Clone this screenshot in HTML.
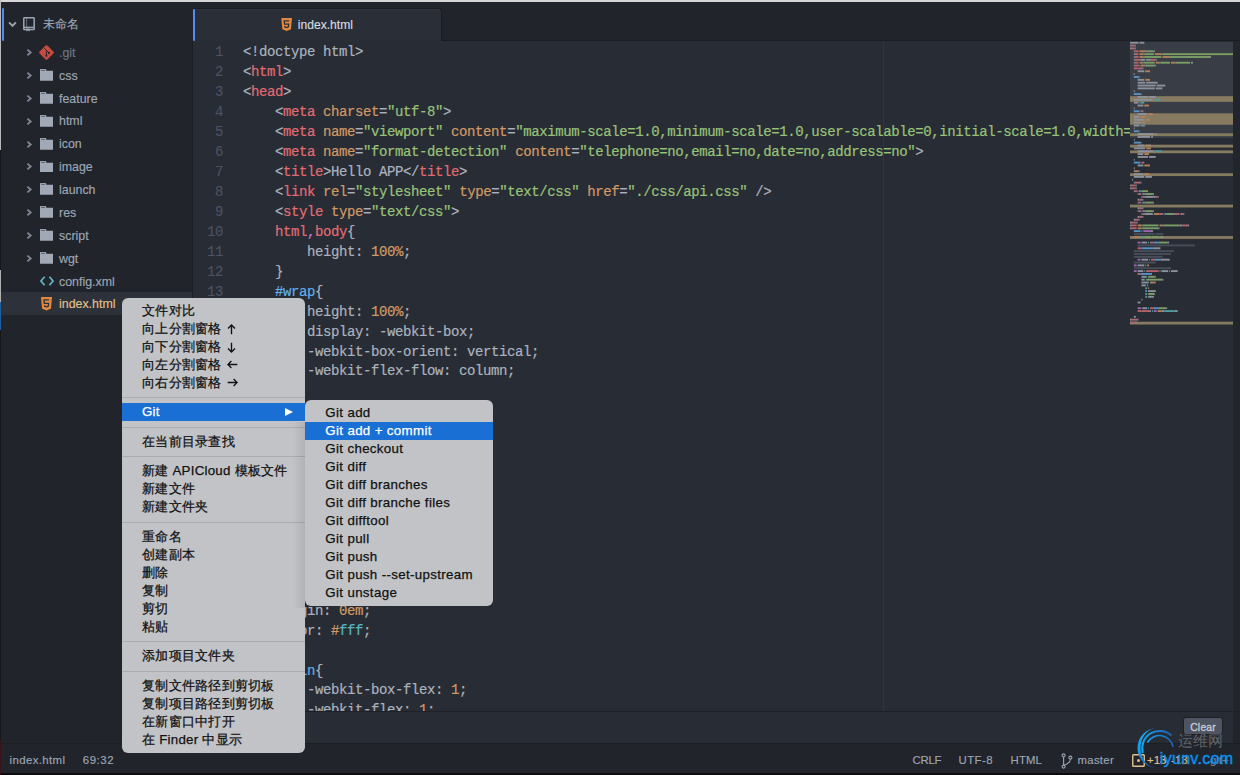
<!DOCTYPE html>
<html><head><meta charset="utf-8"><style>
*{box-sizing:border-box}
html,body{margin:0;padding:0}
body{width:1240px;height:775px;overflow:hidden;position:relative;background:#21252b;font-family:"Liberation Sans",sans-serif}
#top{position:absolute;left:0;top:0;width:1240px;height:2px;background:#d6d6d6}
#side{position:absolute;left:0;top:2px;width:192px;height:743px;background:#21252b;overflow:hidden}
#rootbar{position:absolute;left:2px;top:5.7px;width:2px;height:33.6px;background:#568af2;border-radius:1px}
#sel{position:absolute;left:0;top:290px;width:192px;height:23px;background:#2c313a}
.tr{position:absolute;left:0;height:22.88px;width:192px;line-height:22.88px;font-size:12.4px;color:#9da5b4;white-space:nowrap}
.tr .chev{position:absolute;left:26px;top:6.8px}
.tr .icw{position:absolute;left:39.5px;top:0;height:22.88px}
.tr .icw svg{position:absolute;left:0;display:block}
.ic-folder svg{top:4.9px;width:13.6px;height:11.9px;left:0.1px !important}
.ic-git svg{top:4.0px;left:-0.6px !important}
.ic-xml svg{top:6.3px}
.ic-html5 svg{top:4.3px;left:1.4px !important}
.tr .nm{position:absolute;left:59px;top:0.5px}
.tr.ign .nm{color:#6f7683}
.tr.mod .nm{color:#e2c08d}
.root{top:10.5px}
.root .chev{left:8px;top:8.5px}
.root .icw{left:23px}
.root .icw svg{top:4px}
.root .nm{left:42.6px;font-size:12px;top:0.3px}
#tabbar{position:absolute;left:192px;top:2px;width:1048px;height:39px;background:#21252b;border-bottom:1px solid #1b1d22}
#tab{position:absolute;left:1px;top:6.3px;width:249.3px;height:32.7px;background:#2a2e36;border-top-right-radius:3px;border-top:1px solid #1b1d22;border-right:1px solid #1b1d22;box-shadow:inset 0 1px 0 #30343c}
#tabbl{position:absolute;left:0;top:-0.7px;width:2px;height:32px;background:#568af2;border-radius:1px}
.ticon{position:absolute;left:88.3px;top:8.7px}
.ticon svg{display:block;width:11.3px;height:13px}
.tname{position:absolute;left:104.8px;top:0.3px;line-height:31px;font-size:12.1px;color:#d7dae0}
#editor{position:absolute;left:193px;top:41px;width:1047px;height:671px;background:#282c34;overflow:hidden}
#wrapguide{position:absolute;left:690px;top:0;width:1px;height:671px;background:#30343c}
#code{position:absolute;left:0;top:0;width:937px;height:670px;overflow:hidden}
.ln{position:absolute;left:50px;height:19.94px;line-height:19.94px;font-family:"Liberation Mono",monospace;font-size:14px;letter-spacing:-0.4px;color:#abb2bf;white-space:pre;-webkit-text-stroke:0.2px currentColor}
.num{position:absolute;left:0;width:30px;text-align:right;height:19.94px;line-height:19.94px;font-family:"Liberation Mono",monospace;font-size:14px;letter-spacing:-0.4px;color:#4b5263;margin-top:-0.1px;-webkit-text-stroke:0.15px currentColor}
.t{color:#e06c75}.a{color:#d19a66}.s{color:#98c379}.n{color:#d19a66}.i{color:#61afef}.c{color:#56b6c2}.u{color:#c678dd}
#mm{position:absolute;left:937px;top:0;width:103px;height:671px}
#mmstrip{position:absolute;left:1040px;top:0;width:7px;height:671px;background:#22262c}
#panel{position:absolute;left:193px;top:711px;width:1047px;height:32px;background:#282c34;border-top:1px solid #1e2127}
#clear{position:absolute;left:990.3px;top:5.3px;width:39.6px;height:18px;background:#4f5462;border:1px solid #1d1f24;border-radius:3px;color:#c9ccd2;font-size:10.3px;letter-spacing:.25px;line-height:20.5px;text-align:center;-webkit-text-stroke:0.3px #c9ccd2}
#pstrip{position:absolute;left:1040px;top:0;width:7px;height:32px;background:#21252b}
#status{position:absolute;left:0;top:743px;width:1240px;height:30px;background:#21252b;border-top:1px solid #1b1e23}
.sb{position:absolute;top:8.6px;font-size:11.4px;line-height:14px;color:#9da5b4;white-space:nowrap}
#bottom{position:absolute;left:0;top:773px;width:1240px;height:2px;background:#0c0c0c}
#wm{position:absolute;left:1130px;top:718px;width:110px;height:57px;overflow:hidden}
.wmcn{position:absolute;left:47.5px;top:14px;font-size:15px;line-height:18px;color:rgba(120,122,126,.75);letter-spacing:0px;font-weight:300}
.wmen{position:absolute;left:29.8px;top:31.5px;font-size:16px;line-height:18px;color:#0b8ee8;letter-spacing:.3px;-webkit-text-stroke:0.45px #0b8ee8}
#menu{position:absolute;left:122px;top:298.2px;width:183px;height:454.4px;background:#c1c3c6;border-radius:6px;padding-top:3.8px}
.mi{position:relative;height:18px;line-height:17px;font-size:13.3px;letter-spacing:.25px;color:#111;padding-left:20px;white-space:nowrap}
.mi.hl{background:#1a6fd5;color:#fff}
.msep{height:11.47px;position:relative}
.msep:after{content:"";position:absolute;left:0;right:0;top:5.2px;height:1px;background:#abacaf}
.tri{position:absolute;left:163px;top:4.3px;width:0;height:0;border-left:8.6px solid #fff;border-top:4.9px solid transparent;border-bottom:4.9px solid transparent}
#sub{position:absolute;left:305.3px;top:400px;width:187.8px;height:205.8px;background:#c1c3c6;border-radius:6px;padding-top:3.8px}
.arr{position:absolute;left:105.4px;top:3.6px}
.mi{-webkit-text-stroke:0.25px currentColor}
.tr .nm,.tname,.sb{-webkit-text-stroke:0.15px currentColor}

#ledge1{position:absolute;left:0;top:0;width:1px;height:160px;background:#b9b9b9;z-index:5}#ledge4{position:absolute;left:0;top:270px;width:1px;height:60px;background:#b0b0b0;z-index:6}#ledge5{position:absolute;left:0;top:302px;width:1px;height:28px;background:#1e5f9e;z-index:7}
#ledge2{position:absolute;left:0;top:150px;width:1px;height:590px;background:#15171b;z-index:5}
#ledge3{position:absolute;left:0;top:740px;width:1px;height:35px;background:#3a1416;z-index:5}
#sideborder{position:absolute;left:192px;top:41px;width:1px;height:702px;background:#1c1f24;z-index:3}
#sub .mi{letter-spacing:.35px}
#menu,#sub{z-index:20}
#wm{z-index:15}
#subshadow{position:absolute;left:293px;top:421.7px;width:12px;height:186px;background:linear-gradient(to right,rgba(0,0,0,0),rgba(0,0,0,.09));z-index:21}

</style></head><body>
<div id="top"></div>
<div id="ledge1"></div><div id="ledge2"></div><div id="ledge3"></div><div id="ledge4"></div><div id="ledge5"></div>
<div id="sideborder"></div>
<div id="side">
 <div id="rootbar"></div>
 <div class="tr root"><svg class="chev" width="9" height="7" viewBox="0 0 9 7"><path d="M1.1 1.3 L4.5 4.8 L7.9 1.3" stroke="#9da5b4" stroke-width="1.9" fill="none"/></svg><span class="icw"><svg width="12" height="15" viewBox="0 0 12 15"><path d="M0.8 1.4 Q0.8 0.75 1.45 0.75 H10.55 Q11.2 0.75 11.2 1.4 V11.9 Q11.2 12.55 10.55 12.55 H1.45 Q0.8 12.55 0.8 11.9 Z" stroke="#9da5b4" stroke-width="1.5" fill="none"/><path d="M3.6 1.2 V10.5" stroke="#9da5b4" stroke-width="1.1" stroke-dasharray="1.1 1" fill="none"/><path d="M0.8 10.3 H11.2" stroke="#9da5b4" stroke-width="1.3" fill="none"/><path d="M3.4 11.5 H6.6 V14.6 L5 13.5 L3.4 14.6 Z" fill="#9da5b4"/></svg></span><span class="nm">未命名</span></div>
 <div id="sel"></div>
 <div class="tr ign" style="top:39.30px"><svg class="chev" width="7" height="9" viewBox="0 0 7 9"><path d="M1.4 1.6 L4.7 4.5 L1.4 7.4" stroke="#7f8693" stroke-width="1.9" fill="none"/></svg><span class="icw ic-git"><svg width="15" height="15" viewBox="0 0 15 15"><path d="M6.6 0.6 Q7.5 -0.2 8.4 0.6 L14.4 6.6 Q15.2 7.5 14.4 8.4 L8.4 14.4 Q7.5 15.2 6.6 14.4 L0.6 8.4 Q-0.2 7.5 0.6 6.6 Z" fill="#c8493f"/><path d="M5.3 3.3 L7.4 5.4 V10.8 M7.4 5.4 L9.8 7.8" stroke="#21252b" stroke-width="0.9" fill="none"/><circle cx="7.4" cy="10.8" r="1.05" fill="#21252b"/><circle cx="9.9" cy="7.9" r="1.05" fill="#21252b"/></svg></span><span class="nm">.git</span></div>
<div class="tr" style="top:62.18px"><svg class="chev" width="7" height="9" viewBox="0 0 7 9"><path d="M1.4 1.6 L4.7 4.5 L1.4 7.4" stroke="#7f8693" stroke-width="1.9" fill="none"/></svg><span class="icw ic-folder"><svg width="14" height="12" viewBox="0 0 14 12"><path d="M0 0.6 Q0 0 0.6 0 H5.6 Q6.2 0 6.4 0.6 L6.6 1.6 H13.4 Q14 1.6 14 2.2 V11.4 Q14 12 13.4 12 H0.6 Q0 12 0 11.4 Z" fill="#a2a9b6"/><path d="M1.2 1.3 H5.2" stroke="#4e535c" stroke-width="0.9"/></svg></span><span class="nm">css</span></div>
<div class="tr" style="top:85.06px"><svg class="chev" width="7" height="9" viewBox="0 0 7 9"><path d="M1.4 1.6 L4.7 4.5 L1.4 7.4" stroke="#7f8693" stroke-width="1.9" fill="none"/></svg><span class="icw ic-folder"><svg width="14" height="12" viewBox="0 0 14 12"><path d="M0 0.6 Q0 0 0.6 0 H5.6 Q6.2 0 6.4 0.6 L6.6 1.6 H13.4 Q14 1.6 14 2.2 V11.4 Q14 12 13.4 12 H0.6 Q0 12 0 11.4 Z" fill="#a2a9b6"/><path d="M1.2 1.3 H5.2" stroke="#4e535c" stroke-width="0.9"/></svg></span><span class="nm">feature</span></div>
<div class="tr" style="top:107.94px"><svg class="chev" width="7" height="9" viewBox="0 0 7 9"><path d="M1.4 1.6 L4.7 4.5 L1.4 7.4" stroke="#7f8693" stroke-width="1.9" fill="none"/></svg><span class="icw ic-folder"><svg width="14" height="12" viewBox="0 0 14 12"><path d="M0 0.6 Q0 0 0.6 0 H5.6 Q6.2 0 6.4 0.6 L6.6 1.6 H13.4 Q14 1.6 14 2.2 V11.4 Q14 12 13.4 12 H0.6 Q0 12 0 11.4 Z" fill="#a2a9b6"/><path d="M1.2 1.3 H5.2" stroke="#4e535c" stroke-width="0.9"/></svg></span><span class="nm">html</span></div>
<div class="tr" style="top:130.82px"><svg class="chev" width="7" height="9" viewBox="0 0 7 9"><path d="M1.4 1.6 L4.7 4.5 L1.4 7.4" stroke="#7f8693" stroke-width="1.9" fill="none"/></svg><span class="icw ic-folder"><svg width="14" height="12" viewBox="0 0 14 12"><path d="M0 0.6 Q0 0 0.6 0 H5.6 Q6.2 0 6.4 0.6 L6.6 1.6 H13.4 Q14 1.6 14 2.2 V11.4 Q14 12 13.4 12 H0.6 Q0 12 0 11.4 Z" fill="#a2a9b6"/><path d="M1.2 1.3 H5.2" stroke="#4e535c" stroke-width="0.9"/></svg></span><span class="nm">icon</span></div>
<div class="tr" style="top:153.70px"><svg class="chev" width="7" height="9" viewBox="0 0 7 9"><path d="M1.4 1.6 L4.7 4.5 L1.4 7.4" stroke="#7f8693" stroke-width="1.9" fill="none"/></svg><span class="icw ic-folder"><svg width="14" height="12" viewBox="0 0 14 12"><path d="M0 0.6 Q0 0 0.6 0 H5.6 Q6.2 0 6.4 0.6 L6.6 1.6 H13.4 Q14 1.6 14 2.2 V11.4 Q14 12 13.4 12 H0.6 Q0 12 0 11.4 Z" fill="#a2a9b6"/><path d="M1.2 1.3 H5.2" stroke="#4e535c" stroke-width="0.9"/></svg></span><span class="nm">image</span></div>
<div class="tr" style="top:176.58px"><svg class="chev" width="7" height="9" viewBox="0 0 7 9"><path d="M1.4 1.6 L4.7 4.5 L1.4 7.4" stroke="#7f8693" stroke-width="1.9" fill="none"/></svg><span class="icw ic-folder"><svg width="14" height="12" viewBox="0 0 14 12"><path d="M0 0.6 Q0 0 0.6 0 H5.6 Q6.2 0 6.4 0.6 L6.6 1.6 H13.4 Q14 1.6 14 2.2 V11.4 Q14 12 13.4 12 H0.6 Q0 12 0 11.4 Z" fill="#a2a9b6"/><path d="M1.2 1.3 H5.2" stroke="#4e535c" stroke-width="0.9"/></svg></span><span class="nm">launch</span></div>
<div class="tr" style="top:199.46px"><svg class="chev" width="7" height="9" viewBox="0 0 7 9"><path d="M1.4 1.6 L4.7 4.5 L1.4 7.4" stroke="#7f8693" stroke-width="1.9" fill="none"/></svg><span class="icw ic-folder"><svg width="14" height="12" viewBox="0 0 14 12"><path d="M0 0.6 Q0 0 0.6 0 H5.6 Q6.2 0 6.4 0.6 L6.6 1.6 H13.4 Q14 1.6 14 2.2 V11.4 Q14 12 13.4 12 H0.6 Q0 12 0 11.4 Z" fill="#a2a9b6"/><path d="M1.2 1.3 H5.2" stroke="#4e535c" stroke-width="0.9"/></svg></span><span class="nm">res</span></div>
<div class="tr" style="top:222.34px"><svg class="chev" width="7" height="9" viewBox="0 0 7 9"><path d="M1.4 1.6 L4.7 4.5 L1.4 7.4" stroke="#7f8693" stroke-width="1.9" fill="none"/></svg><span class="icw ic-folder"><svg width="14" height="12" viewBox="0 0 14 12"><path d="M0 0.6 Q0 0 0.6 0 H5.6 Q6.2 0 6.4 0.6 L6.6 1.6 H13.4 Q14 1.6 14 2.2 V11.4 Q14 12 13.4 12 H0.6 Q0 12 0 11.4 Z" fill="#a2a9b6"/><path d="M1.2 1.3 H5.2" stroke="#4e535c" stroke-width="0.9"/></svg></span><span class="nm">script</span></div>
<div class="tr" style="top:245.22px"><svg class="chev" width="7" height="9" viewBox="0 0 7 9"><path d="M1.4 1.6 L4.7 4.5 L1.4 7.4" stroke="#7f8693" stroke-width="1.9" fill="none"/></svg><span class="icw ic-folder"><svg width="14" height="12" viewBox="0 0 14 12"><path d="M0 0.6 Q0 0 0.6 0 H5.6 Q6.2 0 6.4 0.6 L6.6 1.6 H13.4 Q14 1.6 14 2.2 V11.4 Q14 12 13.4 12 H0.6 Q0 12 0 11.4 Z" fill="#a2a9b6"/><path d="M1.2 1.3 H5.2" stroke="#4e535c" stroke-width="0.9"/></svg></span><span class="nm">wgt</span></div>
<div class="tr" style="top:268.10px"><span class="icw ic-xml"><svg width="14" height="10" viewBox="0 0 14 10"><path d="M4.6 0.8 L1 5 L4.6 9.2 M9.4 0.8 L13 5 L9.4 9.2" stroke="#62b3c6" stroke-width="1.7" fill="none"/></svg></span><span class="nm">config.xml</span></div>
<div class="tr mod" style="top:290.98px"><span class="icw ic-html5"><svg width="11" height="13.5" viewBox="0 0 11 13.5"><path d="M0 0 H11 L10 11.6 L5.5 13.5 L1 11.6 Z" fill="#e2893f"/><path d="M8.1 2.9 H3 L3.3 6.4 H7.6 L7.35 9.2 L5.5 9.9 L3.65 9.3 L3.55 8.3" stroke="#2c313a" stroke-width="1.35" fill="none"/></svg></span><span class="nm">index.html</span></div>
</div>
<div id="tabbar">
 <div id="tab"><div id="tabbl"></div><span class="ticon"><svg width="11.3" height="13" viewBox="0 0 11 13.5"><path d="M0 0 H11 L10 11.6 L5.5 13.5 L1 11.6 Z" fill="#e2893f"/><path d="M8.1 2.9 H3 L3.3 6.4 H7.6 L7.35 9.2 L5.5 9.9 L3.65 9.3 L3.55 8.3" stroke="#2b2f37" stroke-width="1.35" fill="none"/></svg></span><span class="tname">index.html</span></div>
</div>
<div id="editor">
 <div id="wrapguide"></div>
 <div id="code">
<div class="ln" style="top:2.40px">&lt;!doctype html&gt;</div>
<div class="num" style="top:2.40px">1</div>
<div class="ln" style="top:22.34px">&lt;<span class="t">html</span>&gt;</div>
<div class="num" style="top:22.34px">2</div>
<div class="ln" style="top:42.28px">&lt;<span class="t">head</span>&gt;</div>
<div class="num" style="top:42.28px">3</div>
<div class="ln" style="top:62.22px">    &lt;<span class="t">meta</span> <span class="a">charset</span>=<span class="s">"utf-8"</span>&gt;</div>
<div class="num" style="top:62.22px">4</div>
<div class="ln" style="top:82.16px">    &lt;<span class="t">meta</span> <span class="a">name</span>=<span class="s">"viewport"</span> <span class="a">content</span>=<span class="s">"maximum-scale=1.0,minimum-scale=1.0,user-scalable=0,initial-scale=1.0,width=device-width"</span>/&gt;</div>
<div class="num" style="top:82.16px">5</div>
<div class="ln" style="top:102.10px">    &lt;<span class="t">meta</span> <span class="a">name</span>=<span class="s">"format-detection"</span> <span class="a">content</span>=<span class="s">"telephone=no,email=no,date=no,address=no"</span>&gt;</div>
<div class="num" style="top:102.10px">6</div>
<div class="ln" style="top:122.04px">    &lt;<span class="t">title</span>&gt;Hello APP&lt;/<span class="t">title</span>&gt;</div>
<div class="num" style="top:122.04px">7</div>
<div class="ln" style="top:141.98px">    &lt;<span class="t">link</span> <span class="a">rel</span>=<span class="s">"stylesheet"</span> <span class="a">type</span>=<span class="s">"text/css"</span> <span class="a">href</span>=<span class="s">"./css/api.css"</span> /&gt;</div>
<div class="num" style="top:141.98px">8</div>
<div class="ln" style="top:161.92px">    &lt;<span class="t">style</span> <span class="a">type</span>=<span class="s">"text/css"</span>&gt;</div>
<div class="num" style="top:161.92px">9</div>
<div class="ln" style="top:181.86px">    <span class="t">html</span><span class="u">,</span><span class="t">body</span>{</div>
<div class="num" style="top:181.86px">10</div>
<div class="ln" style="top:201.80px">        height: <span class="n">100%</span>;</div>
<div class="num" style="top:201.80px">11</div>
<div class="ln" style="top:221.74px">    }</div>
<div class="num" style="top:221.74px">12</div>
<div class="ln" style="top:241.68px">    <span class="i">#wrap</span>{</div>
<div class="num" style="top:241.68px">13</div>
<div class="ln" style="top:261.62px">        height: <span class="n">100%</span>;</div>
<div class="ln" style="top:281.56px">        display: -webkit-box;</div>
<div class="ln" style="top:301.50px">        -webkit-box-orient: vertical;</div>
<div class="ln" style="top:321.44px">        -webkit-flex-flow: column;</div>
<div class="ln" style="top:341.38px">    }</div>
<div class="ln" style="top:361.32px"></div>
<div class="ln" style="top:381.26px"></div>
<div class="ln" style="top:401.20px"></div>
<div class="ln" style="top:421.14px"></div>
<div class="ln" style="top:441.08px"></div>
<div class="ln" style="top:461.02px"></div>
<div class="ln" style="top:480.96px"></div>
<div class="ln" style="top:500.90px"></div>
<div class="ln" style="top:520.84px"></div>
<div class="ln" style="top:540.78px"></div>
<div class="ln" style="top:560.72px">    margin: <span class="n">0em</span>;</div>
<div class="ln" style="top:580.66px">    color: <span class="n">#</span><span class="c">fff</span>;</div>
<div class="ln" style="top:600.60px">    }</div>
<div class="ln" style="top:620.54px">    <span class="i">#main</span>{</div>
<div class="ln" style="top:640.48px">        -webkit-box-flex: <span class="n">1</span>;</div>
<div class="ln" style="top:660.42px">        -webkit-flex: <span class="n">1</span>;</div>
 </div>
 <div id="mm"><svg width="103.1" height="671" viewBox="0 0 103.1 671" style="position:absolute;left:0;top:0"><rect x="0" y="0.90" width="103.1" height="96.2" fill="#393d45"/><rect x="0" y="55.14" width="103.1" height="5.71" fill="#867a60"/><rect x="0" y="72.28" width="103.1" height="11.42" fill="#867a60"/><rect x="0" y="92.26" width="103.1" height="2.85" fill="#867a60"/><rect x="0" y="103.68" width="103.1" height="2.85" fill="#867a60"/><rect x="0" y="109.39" width="103.1" height="2.85" fill="#867a60"/><rect x="0" y="132.23" width="103.1" height="2.85" fill="#867a60"/><rect x="0" y="163.63" width="103.1" height="2.85" fill="#867a60"/><rect x="0" y="195.04" width="103.1" height="2.85" fill="#867a60"/><rect x="0" y="280.69" width="103.1" height="2.85" fill="#867a60"/><rect x="0.00" y="0.75" width="8.58" height="1.9" fill="#8c919b"/><rect x="9.53" y="0.75" width="4.76" height="1.9" fill="#8c919b"/><rect x="0.00" y="3.60" width="0.95" height="1.9" fill="#8c919b"/><rect x="0.95" y="3.60" width="3.81" height="1.9" fill="#b5636b"/><rect x="4.76" y="3.60" width="0.95" height="1.9" fill="#8c919b"/><rect x="0.00" y="6.46" width="0.95" height="1.9" fill="#8c919b"/><rect x="0.95" y="6.46" width="3.81" height="1.9" fill="#b5636b"/><rect x="4.76" y="6.46" width="0.95" height="1.9" fill="#8c919b"/><rect x="3.81" y="9.31" width="0.95" height="1.9" fill="#8c919b"/><rect x="4.76" y="9.31" width="3.81" height="1.9" fill="#b5636b"/><rect x="9.53" y="9.31" width="6.67" height="1.9" fill="#b08058"/><rect x="16.20" y="9.31" width="0.95" height="1.9" fill="#8c919b"/><rect x="17.15" y="9.31" width="6.67" height="1.9" fill="#7b9d66"/><rect x="23.82" y="9.31" width="0.95" height="1.9" fill="#8c919b"/><rect x="3.81" y="12.17" width="0.95" height="1.9" fill="#8c919b"/><rect x="4.76" y="12.17" width="3.81" height="1.9" fill="#b5636b"/><rect x="9.53" y="12.17" width="3.81" height="1.9" fill="#b08058"/><rect x="13.34" y="12.17" width="0.95" height="1.9" fill="#8c919b"/><rect x="14.29" y="12.17" width="9.53" height="1.9" fill="#7b9d66"/><rect x="24.78" y="12.17" width="6.67" height="1.9" fill="#b08058"/><rect x="31.45" y="12.17" width="0.95" height="1.9" fill="#8c919b"/><rect x="32.40" y="12.17" width="70.70" height="1.9" fill="#7b9d66"/><rect x="3.81" y="15.03" width="0.95" height="1.9" fill="#8c919b"/><rect x="4.76" y="15.03" width="3.81" height="1.9" fill="#b5636b"/><rect x="9.53" y="15.03" width="3.81" height="1.9" fill="#b08058"/><rect x="13.34" y="15.03" width="0.95" height="1.9" fill="#8c919b"/><rect x="14.29" y="15.03" width="17.15" height="1.9" fill="#7b9d66"/><rect x="32.40" y="15.03" width="6.67" height="1.9" fill="#b08058"/><rect x="39.07" y="15.03" width="0.95" height="1.9" fill="#8c919b"/><rect x="40.03" y="15.03" width="40.03" height="1.9" fill="#7b9d66"/><rect x="80.05" y="15.03" width="0.95" height="1.9" fill="#8c919b"/><rect x="3.81" y="17.88" width="0.95" height="1.9" fill="#8c919b"/><rect x="4.76" y="17.88" width="4.76" height="1.9" fill="#b5636b"/><rect x="9.53" y="17.88" width="0.95" height="1.9" fill="#8c919b"/><rect x="10.48" y="17.88" width="4.76" height="1.9" fill="#8c919b"/><rect x="16.20" y="17.88" width="2.86" height="1.9" fill="#8c919b"/><rect x="19.06" y="17.88" width="1.91" height="1.9" fill="#8c919b"/><rect x="20.97" y="17.88" width="4.76" height="1.9" fill="#b5636b"/><rect x="25.73" y="17.88" width="0.95" height="1.9" fill="#8c919b"/><rect x="3.81" y="20.73" width="0.95" height="1.9" fill="#8c919b"/><rect x="4.76" y="20.73" width="3.81" height="1.9" fill="#b5636b"/><rect x="9.53" y="20.73" width="2.86" height="1.9" fill="#b08058"/><rect x="12.39" y="20.73" width="0.95" height="1.9" fill="#8c919b"/><rect x="13.34" y="20.73" width="11.44" height="1.9" fill="#7b9d66"/><rect x="25.73" y="20.73" width="3.81" height="1.9" fill="#b08058"/><rect x="29.54" y="20.73" width="0.95" height="1.9" fill="#8c919b"/><rect x="30.50" y="20.73" width="9.53" height="1.9" fill="#7b9d66"/><rect x="40.98" y="20.73" width="3.81" height="1.9" fill="#b08058"/><rect x="44.79" y="20.73" width="0.95" height="1.9" fill="#8c919b"/><rect x="45.74" y="20.73" width="14.29" height="1.9" fill="#7b9d66"/><rect x="60.99" y="20.73" width="1.91" height="1.9" fill="#8c919b"/><rect x="3.81" y="23.59" width="0.95" height="1.9" fill="#8c919b"/><rect x="4.76" y="23.59" width="4.76" height="1.9" fill="#b5636b"/><rect x="10.48" y="23.59" width="3.81" height="1.9" fill="#b08058"/><rect x="14.29" y="23.59" width="0.95" height="1.9" fill="#8c919b"/><rect x="15.25" y="23.59" width="9.53" height="1.9" fill="#7b9d66"/><rect x="24.78" y="23.59" width="0.95" height="1.9" fill="#8c919b"/><rect x="3.81" y="26.45" width="3.81" height="1.9" fill="#b5636b"/><rect x="7.62" y="26.45" width="0.95" height="1.9" fill="#9d66b0"/><rect x="8.58" y="26.45" width="3.81" height="1.9" fill="#b5636b"/><rect x="12.39" y="26.45" width="0.95" height="1.9" fill="#8c919b"/><rect x="7.62" y="29.30" width="6.67" height="1.9" fill="#8c919b"/><rect x="15.25" y="29.30" width="3.81" height="1.9" fill="#b08058"/><rect x="19.06" y="29.30" width="0.95" height="1.9" fill="#8c919b"/><rect x="3.81" y="32.16" width="0.95" height="1.9" fill="#8c919b"/><rect x="3.81" y="35.01" width="4.76" height="1.9" fill="#5592c8"/><rect x="8.58" y="35.01" width="0.95" height="1.9" fill="#8c919b"/><rect x="7.62" y="37.87" width="6.67" height="1.9" fill="#8c919b"/><rect x="15.25" y="37.87" width="3.81" height="1.9" fill="#b08058"/><rect x="19.06" y="37.87" width="0.95" height="1.9" fill="#8c919b"/><rect x="7.62" y="40.72" width="7.62" height="1.9" fill="#8c919b"/><rect x="16.20" y="40.72" width="11.44" height="1.9" fill="#8c919b"/><rect x="7.62" y="43.58" width="18.11" height="1.9" fill="#8c919b"/><rect x="26.68" y="43.58" width="8.58" height="1.9" fill="#8c919b"/><rect x="7.62" y="46.43" width="17.15" height="1.9" fill="#8c919b"/><rect x="25.73" y="46.43" width="6.67" height="1.9" fill="#8c919b"/><rect x="3.81" y="49.28" width="0.95" height="1.9" fill="#8c919b"/><rect x="3.81" y="52.14" width="6.67" height="1.9" fill="#5592c8"/><rect x="10.48" y="52.14" width="0.95" height="1.9" fill="#8c919b"/><rect x="7.62" y="54.99" width="10.48" height="1.9" fill="#8c919b"/><rect x="19.06" y="54.99" width="6.67" height="1.9" fill="#8c919b"/><rect x="3.81" y="57.85" width="19.06" height="1.9" fill="#8c919b"/><rect x="23.82" y="57.85" width="0.95" height="1.9" fill="#b08058"/><rect x="24.78" y="57.85" width="5.72" height="1.9" fill="#4e9aa3"/><rect x="3.81" y="60.70" width="4.76" height="1.9" fill="#8c919b"/><rect x="9.53" y="60.70" width="0.95" height="1.9" fill="#b08058"/><rect x="10.48" y="60.70" width="3.81" height="1.9" fill="#4e9aa3"/><rect x="7.62" y="63.56" width="5.72" height="1.9" fill="#8c919b"/><rect x="14.29" y="63.56" width="4.76" height="1.9" fill="#b08058"/><rect x="3.81" y="66.42" width="0.95" height="1.9" fill="#8c919b"/><rect x="3.81" y="69.27" width="5.72" height="1.9" fill="#5592c8"/><rect x="10.48" y="69.27" width="1.91" height="1.9" fill="#b5636b"/><rect x="12.39" y="69.27" width="0.95" height="1.9" fill="#8c919b"/><rect x="7.62" y="72.12" width="9.53" height="1.9" fill="#8c919b"/><rect x="18.11" y="72.12" width="4.76" height="1.9" fill="#b08058"/><rect x="3.81" y="74.98" width="5.72" height="1.9" fill="#8c919b"/><rect x="10.48" y="74.98" width="4.76" height="1.9" fill="#b08058"/><rect x="3.81" y="77.83" width="10.48" height="1.9" fill="#8c919b"/><rect x="15.25" y="77.83" width="4.76" height="1.9" fill="#b08058"/><rect x="3.81" y="80.69" width="6.67" height="1.9" fill="#8c919b"/><rect x="11.44" y="80.69" width="2.86" height="1.9" fill="#b08058"/><rect x="14.29" y="80.69" width="0.95" height="1.9" fill="#8c919b"/><rect x="3.81" y="83.55" width="5.72" height="1.9" fill="#8c919b"/><rect x="10.48" y="83.55" width="0.95" height="1.9" fill="#b08058"/><rect x="11.44" y="83.55" width="2.86" height="1.9" fill="#4e9aa3"/><rect x="14.29" y="83.55" width="0.95" height="1.9" fill="#8c919b"/><rect x="3.81" y="86.40" width="0.95" height="1.9" fill="#8c919b"/><rect x="3.81" y="89.25" width="4.76" height="1.9" fill="#5592c8"/><rect x="8.58" y="89.25" width="0.95" height="1.9" fill="#8c919b"/><rect x="7.62" y="92.11" width="16.20" height="1.9" fill="#8c919b"/><rect x="24.78" y="92.11" width="0.95" height="1.9" fill="#b08058"/><rect x="25.73" y="92.11" width="0.95" height="1.9" fill="#8c919b"/><rect x="7.62" y="94.97" width="12.39" height="1.9" fill="#8c919b"/><rect x="20.97" y="94.97" width="0.95" height="1.9" fill="#b08058"/><rect x="21.92" y="94.97" width="0.95" height="1.9" fill="#8c919b"/><rect x="3.81" y="97.82" width="0.95" height="1.9" fill="#8c919b"/><rect x="3.81" y="100.67" width="6.67" height="1.9" fill="#5592c8"/><rect x="10.48" y="100.67" width="0.95" height="1.9" fill="#8c919b"/><rect x="7.62" y="103.53" width="6.67" height="1.9" fill="#8c919b"/><rect x="15.25" y="103.53" width="4.76" height="1.9" fill="#b08058"/><rect x="20.01" y="103.53" width="0.95" height="1.9" fill="#8c919b"/><rect x="3.81" y="106.39" width="11.44" height="1.9" fill="#8c919b"/><rect x="16.20" y="106.39" width="4.76" height="1.9" fill="#b08058"/><rect x="7.62" y="109.24" width="16.20" height="1.9" fill="#8c919b"/><rect x="24.78" y="109.24" width="0.95" height="1.9" fill="#b08058"/><rect x="25.73" y="109.24" width="5.72" height="1.9" fill="#4e9aa3"/><rect x="7.62" y="112.09" width="5.72" height="1.9" fill="#8c919b"/><rect x="14.29" y="112.09" width="4.76" height="1.9" fill="#b08058"/><rect x="7.62" y="114.95" width="10.48" height="1.9" fill="#8c919b"/><rect x="19.06" y="114.95" width="6.67" height="1.9" fill="#8c919b"/><rect x="3.81" y="117.80" width="0.95" height="1.9" fill="#8c919b"/><rect x="3.81" y="120.66" width="6.67" height="1.9" fill="#5592c8"/><rect x="11.44" y="120.66" width="2.86" height="1.9" fill="#b5636b"/><rect x="7.62" y="123.52" width="5.72" height="1.9" fill="#8c919b"/><rect x="14.29" y="123.52" width="5.72" height="1.9" fill="#b08058"/><rect x="3.81" y="126.37" width="0.95" height="1.9" fill="#8c919b"/><rect x="3.81" y="129.22" width="4.76" height="1.9" fill="#b08058"/><rect x="8.58" y="129.22" width="0.95" height="1.9" fill="#8c919b"/><rect x="3.81" y="132.08" width="9.53" height="1.9" fill="#8c919b"/><rect x="14.29" y="132.08" width="4.76" height="1.9" fill="#b08058"/><rect x="3.81" y="134.94" width="10.48" height="1.9" fill="#8c919b"/><rect x="15.25" y="134.94" width="6.67" height="1.9" fill="#8c919b"/><rect x="1.91" y="137.79" width="0.95" height="1.9" fill="#8c919b"/><rect x="3.81" y="140.65" width="0.95" height="1.9" fill="#8c919b"/><rect x="4.76" y="140.65" width="5.72" height="1.9" fill="#b5636b"/><rect x="10.48" y="140.65" width="0.95" height="1.9" fill="#8c919b"/><rect x="0.00" y="143.50" width="0.95" height="1.9" fill="#8c919b"/><rect x="0.95" y="143.50" width="4.76" height="1.9" fill="#b5636b"/><rect x="5.72" y="143.50" width="0.95" height="1.9" fill="#8c919b"/><rect x="0.00" y="146.35" width="0.95" height="1.9" fill="#8c919b"/><rect x="0.95" y="146.35" width="4.76" height="1.9" fill="#b5636b"/><rect x="5.72" y="146.35" width="0.95" height="1.9" fill="#8c919b"/><rect x="3.81" y="149.21" width="0.95" height="1.9" fill="#8c919b"/><rect x="4.76" y="149.21" width="2.86" height="1.9" fill="#b5636b"/><rect x="8.58" y="149.21" width="1.91" height="1.9" fill="#5592c8"/><rect x="10.48" y="149.21" width="0.95" height="1.9" fill="#8c919b"/><rect x="11.44" y="149.21" width="5.72" height="1.9" fill="#7b9d66"/><rect x="17.15" y="149.21" width="0.95" height="1.9" fill="#8c919b"/><rect x="7.62" y="152.06" width="0.95" height="1.9" fill="#8c919b"/><rect x="8.58" y="152.06" width="2.86" height="1.9" fill="#b5636b"/><rect x="12.39" y="152.06" width="1.91" height="1.9" fill="#5592c8"/><rect x="14.29" y="152.06" width="0.95" height="1.9" fill="#8c919b"/><rect x="15.25" y="152.06" width="7.62" height="1.9" fill="#7b9d66"/><rect x="22.87" y="152.06" width="0.95" height="1.9" fill="#8c919b"/><rect x="11.44" y="154.92" width="0.95" height="1.9" fill="#8c919b"/><rect x="12.39" y="154.92" width="1.91" height="1.9" fill="#b5636b"/><rect x="14.29" y="154.92" width="0.95" height="1.9" fill="#8c919b"/><rect x="15.25" y="154.92" width="8.58" height="1.9" fill="#8c919b"/><rect x="23.82" y="154.92" width="1.91" height="1.9" fill="#8c919b"/><rect x="25.73" y="154.92" width="1.91" height="1.9" fill="#b5636b"/><rect x="27.64" y="154.92" width="0.95" height="1.9" fill="#8c919b"/><rect x="7.62" y="157.78" width="1.91" height="1.9" fill="#8c919b"/><rect x="9.53" y="157.78" width="2.86" height="1.9" fill="#b5636b"/><rect x="12.39" y="157.78" width="0.95" height="1.9" fill="#8c919b"/><rect x="7.62" y="160.63" width="0.95" height="1.9" fill="#8c919b"/><rect x="8.58" y="160.63" width="2.86" height="1.9" fill="#b5636b"/><rect x="12.39" y="160.63" width="1.91" height="1.9" fill="#5592c8"/><rect x="14.29" y="160.63" width="0.95" height="1.9" fill="#8c919b"/><rect x="15.25" y="160.63" width="7.62" height="1.9" fill="#7b9d66"/><rect x="22.87" y="160.63" width="0.95" height="1.9" fill="#8c919b"/><rect x="7.62" y="166.34" width="1.91" height="1.9" fill="#8c919b"/><rect x="9.53" y="166.34" width="2.86" height="1.9" fill="#b5636b"/><rect x="12.39" y="166.34" width="0.95" height="1.9" fill="#8c919b"/><rect x="7.62" y="169.19" width="0.95" height="1.9" fill="#8c919b"/><rect x="8.58" y="169.19" width="2.86" height="1.9" fill="#b5636b"/><rect x="12.39" y="169.19" width="1.91" height="1.9" fill="#5592c8"/><rect x="14.29" y="169.19" width="0.95" height="1.9" fill="#8c919b"/><rect x="15.25" y="169.19" width="7.62" height="1.9" fill="#7b9d66"/><rect x="22.87" y="169.19" width="0.95" height="1.9" fill="#8c919b"/><rect x="11.44" y="172.05" width="0.95" height="1.9" fill="#8c919b"/><rect x="12.39" y="172.05" width="1.91" height="1.9" fill="#b5636b"/><rect x="14.29" y="172.05" width="8.58" height="1.9" fill="#8c919b"/><rect x="23.82" y="172.05" width="5.72" height="1.9" fill="#b08058"/><rect x="29.54" y="172.05" width="3.81" height="1.9" fill="#b5636b"/><rect x="34.31" y="172.05" width="1.91" height="1.9" fill="#5592c8"/><rect x="36.21" y="172.05" width="6.67" height="1.9" fill="#7b9d66"/><rect x="42.88" y="172.05" width="1.91" height="1.9" fill="#8c919b"/><rect x="44.79" y="172.05" width="4.76" height="1.9" fill="#b5636b"/><rect x="50.51" y="172.05" width="1.91" height="1.9" fill="#8c919b"/><rect x="52.41" y="172.05" width="1.91" height="1.9" fill="#b5636b"/><rect x="7.62" y="174.91" width="1.91" height="1.9" fill="#8c919b"/><rect x="9.53" y="174.91" width="2.86" height="1.9" fill="#b5636b"/><rect x="12.39" y="174.91" width="0.95" height="1.9" fill="#8c919b"/><rect x="3.81" y="177.76" width="1.91" height="1.9" fill="#8c919b"/><rect x="5.72" y="177.76" width="2.86" height="1.9" fill="#b5636b"/><rect x="8.58" y="177.76" width="0.95" height="1.9" fill="#8c919b"/><rect x="0.00" y="180.62" width="1.91" height="1.9" fill="#8c919b"/><rect x="1.91" y="180.62" width="4.76" height="1.9" fill="#b5636b"/><rect x="6.67" y="180.62" width="0.95" height="1.9" fill="#8c919b"/><rect x="0.00" y="183.47" width="0.95" height="1.9" fill="#8c919b"/><rect x="0.95" y="183.47" width="5.72" height="1.9" fill="#b5636b"/><rect x="7.62" y="183.47" width="3.81" height="1.9" fill="#b08058"/><rect x="11.44" y="183.47" width="0.95" height="1.9" fill="#8c919b"/><rect x="12.39" y="183.47" width="16.20" height="1.9" fill="#7b9d66"/><rect x="29.54" y="183.47" width="2.86" height="1.9" fill="#b08058"/><rect x="32.40" y="183.47" width="0.95" height="1.9" fill="#8c919b"/><rect x="33.35" y="183.47" width="16.20" height="1.9" fill="#7b9d66"/><rect x="49.56" y="183.47" width="2.86" height="1.9" fill="#8c919b"/><rect x="52.41" y="183.47" width="5.72" height="1.9" fill="#b5636b"/><rect x="58.13" y="183.47" width="0.95" height="1.9" fill="#8c919b"/><rect x="0.00" y="186.32" width="0.95" height="1.9" fill="#8c919b"/><rect x="0.95" y="186.32" width="5.72" height="1.9" fill="#b5636b"/><rect x="7.62" y="186.32" width="3.81" height="1.9" fill="#b08058"/><rect x="11.44" y="186.32" width="0.95" height="1.9" fill="#8c919b"/><rect x="12.39" y="186.32" width="16.20" height="1.9" fill="#7b9d66"/><rect x="28.59" y="186.32" width="0.95" height="1.9" fill="#8c919b"/><rect x="3.81" y="189.18" width="6.67" height="1.9" fill="#5592c8"/><rect x="11.44" y="189.18" width="0.95" height="1.9" fill="#4e9aa3"/><rect x="13.34" y="189.18" width="7.62" height="1.9" fill="#9d66b0"/><rect x="20.97" y="189.18" width="1.91" height="1.9" fill="#8c919b"/><rect x="3.81" y="192.03" width="20.97" height="1.9" fill="#484e59"/><rect x="25.73" y="192.03" width="7.62" height="1.9" fill="#484e59"/><rect x="3.81" y="194.89" width="6.67" height="1.9" fill="#b08058"/><rect x="10.48" y="194.89" width="3.81" height="1.9" fill="#4e9aa3"/><rect x="14.29" y="194.89" width="6.67" height="1.9" fill="#7b9d66"/><rect x="21.92" y="194.89" width="6.67" height="1.9" fill="#7b9d66"/><rect x="29.54" y="194.89" width="1.91" height="1.9" fill="#7b9d66"/><rect x="31.45" y="194.89" width="1.91" height="1.9" fill="#8c919b"/><rect x="7.62" y="200.60" width="2.86" height="1.9" fill="#9d66b0"/><rect x="11.44" y="200.60" width="5.72" height="1.9" fill="#8c919b"/><rect x="18.11" y="200.60" width="0.95" height="1.9" fill="#4e9aa3"/><rect x="20.01" y="200.60" width="3.81" height="1.9" fill="#b5636b"/><rect x="23.82" y="200.60" width="4.76" height="1.9" fill="#5592c8"/><rect x="28.59" y="200.60" width="8.58" height="1.9" fill="#7b9d66"/><rect x="37.17" y="200.60" width="1.91" height="1.9" fill="#8c919b"/><rect x="7.62" y="203.46" width="57.18" height="1.9" fill="#484e59"/><rect x="7.62" y="206.31" width="3.81" height="1.9" fill="#b5636b"/><rect x="11.44" y="206.31" width="11.44" height="1.9" fill="#5592c8"/><rect x="22.87" y="206.31" width="7.62" height="1.9" fill="#8c919b"/><rect x="3.81" y="209.16" width="40.03" height="1.9" fill="#484e59"/><rect x="3.81" y="212.02" width="37.17" height="1.9" fill="#484e59"/><rect x="3.81" y="214.88" width="28.59" height="1.9" fill="#484e59"/><rect x="7.62" y="217.73" width="2.86" height="1.9" fill="#9d66b0"/><rect x="11.44" y="217.73" width="6.67" height="1.9" fill="#8c919b"/><rect x="19.06" y="217.73" width="0.95" height="1.9" fill="#4e9aa3"/><rect x="20.97" y="217.73" width="3.81" height="1.9" fill="#b5636b"/><rect x="24.78" y="217.73" width="5.72" height="1.9" fill="#5592c8"/><rect x="30.50" y="217.73" width="8.58" height="1.9" fill="#8c919b"/><rect x="39.07" y="217.73" width="0.95" height="1.9" fill="#b5636b"/><rect x="3.81" y="220.59" width="21.92" height="1.9" fill="#484e59"/><rect x="3.81" y="223.44" width="2.86" height="1.9" fill="#9d66b0"/><rect x="7.62" y="223.44" width="6.67" height="1.9" fill="#8c919b"/><rect x="15.25" y="223.44" width="0.95" height="1.9" fill="#4e9aa3"/><rect x="17.15" y="223.44" width="1.91" height="1.9" fill="#b08058"/><rect x="3.81" y="226.29" width="37.17" height="1.9" fill="#484e59"/><rect x="3.81" y="229.15" width="2.86" height="1.9" fill="#9d66b0"/><rect x="7.62" y="229.15" width="5.72" height="1.9" fill="#8c919b"/><rect x="14.29" y="229.15" width="0.95" height="1.9" fill="#4e9aa3"/><rect x="16.20" y="229.15" width="3.81" height="1.9" fill="#b5636b"/><rect x="20.01" y="229.15" width="8.58" height="1.9" fill="#b5636b"/><rect x="29.54" y="229.15" width="0.95" height="1.9" fill="#4e9aa3"/><rect x="31.45" y="229.15" width="6.67" height="1.9" fill="#8c919b"/><rect x="39.07" y="229.15" width="0.95" height="1.9" fill="#4e9aa3"/><rect x="40.98" y="229.15" width="6.67" height="1.9" fill="#8c919b"/><rect x="7.62" y="232.00" width="2.86" height="1.9" fill="#b5636b"/><rect x="10.48" y="232.00" width="10.48" height="1.9" fill="#5592c8"/><rect x="20.97" y="232.00" width="0.95" height="1.9" fill="#8c919b"/><rect x="11.44" y="234.86" width="4.76" height="1.9" fill="#8c919b"/><rect x="16.20" y="234.86" width="0.95" height="1.9" fill="#4e9aa3"/><rect x="18.11" y="234.86" width="6.67" height="1.9" fill="#7b9d66"/><rect x="24.78" y="234.86" width="0.95" height="1.9" fill="#8c919b"/><rect x="11.44" y="237.72" width="2.86" height="1.9" fill="#8c919b"/><rect x="14.29" y="237.72" width="0.95" height="1.9" fill="#4e9aa3"/><rect x="16.20" y="237.72" width="16.20" height="1.9" fill="#7b9d66"/><rect x="32.40" y="237.72" width="0.95" height="1.9" fill="#8c919b"/><rect x="11.44" y="240.57" width="6.67" height="1.9" fill="#8c919b"/><rect x="18.11" y="240.57" width="0.95" height="1.9" fill="#4e9aa3"/><rect x="20.01" y="240.57" width="4.76" height="1.9" fill="#b08058"/><rect x="24.78" y="240.57" width="0.95" height="1.9" fill="#8c919b"/><rect x="11.44" y="243.43" width="3.81" height="1.9" fill="#8c919b"/><rect x="15.25" y="243.43" width="0.95" height="1.9" fill="#4e9aa3"/><rect x="17.15" y="243.43" width="0.95" height="1.9" fill="#8c919b"/><rect x="15.25" y="246.28" width="1.91" height="1.9" fill="#4e9aa3"/><rect x="18.11" y="246.28" width="0.95" height="1.9" fill="#b08058"/><rect x="15.25" y="249.13" width="1.91" height="1.9" fill="#4e9aa3"/><rect x="18.11" y="249.13" width="7.62" height="1.9" fill="#8c919b"/><rect x="15.25" y="251.99" width="1.91" height="1.9" fill="#4e9aa3"/><rect x="18.11" y="251.99" width="6.67" height="1.9" fill="#7b9d66"/><rect x="15.25" y="254.84" width="1.91" height="1.9" fill="#4e9aa3"/><rect x="18.11" y="254.84" width="5.72" height="1.9" fill="#8c919b"/><rect x="11.44" y="257.70" width="0.95" height="1.9" fill="#8c919b"/><rect x="7.62" y="260.56" width="2.86" height="1.9" fill="#8c919b"/><rect x="7.62" y="266.26" width="3.81" height="1.9" fill="#9d66b0"/><rect x="12.39" y="266.26" width="4.76" height="1.9" fill="#8c919b"/><rect x="18.11" y="266.26" width="0.95" height="1.9" fill="#4e9aa3"/><rect x="20.01" y="266.26" width="3.81" height="1.9" fill="#b5636b"/><rect x="23.82" y="266.26" width="4.76" height="1.9" fill="#5592c8"/><rect x="28.59" y="266.26" width="7.62" height="1.9" fill="#7b9d66"/><rect x="36.21" y="266.26" width="0.95" height="1.9" fill="#8c919b"/><rect x="7.62" y="269.12" width="3.81" height="1.9" fill="#b5636b"/><rect x="11.44" y="269.12" width="8.58" height="1.9" fill="#b5636b"/><rect x="20.01" y="269.12" width="0.95" height="1.9" fill="#8c919b"/><rect x="21.92" y="269.12" width="0.95" height="1.9" fill="#4e9aa3"/><rect x="23.82" y="269.12" width="2.86" height="1.9" fill="#9d66b0"/><rect x="27.64" y="269.12" width="3.81" height="1.9" fill="#b08058"/><rect x="31.45" y="269.12" width="2.86" height="1.9" fill="#8c919b"/><rect x="34.31" y="269.12" width="10.48" height="1.9" fill="#4e9aa3"/><rect x="44.79" y="269.12" width="2.86" height="1.9" fill="#8c919b"/><rect x="3.81" y="274.83" width="1.91" height="1.9" fill="#8c919b"/><rect x="0.00" y="277.69" width="0.95" height="1.9" fill="#8c919b"/><rect x="0.95" y="277.69" width="6.67" height="1.9" fill="#b5636b"/><rect x="7.62" y="277.69" width="0.95" height="1.9" fill="#8c919b"/><rect x="0.00" y="280.54" width="0.95" height="1.9" fill="#8c919b"/><rect x="0.95" y="280.54" width="4.76" height="1.9" fill="#b5636b"/><rect x="5.72" y="280.54" width="0.95" height="1.9" fill="#8c919b"/></svg></div>
 <div id="mmstrip"></div>
</div>
<div id="panel"><div id="clear">Clear</div><div id="pstrip"></div></div>
<div id="status">
 <span class="sb" style="left:9.6px;letter-spacing:.38px">index.html</span>
 <span class="sb" style="left:82.8px;letter-spacing:.55px">69:32</span>
 <span class="sb" style="left:912.6px;letter-spacing:-.27px">CRLF</span>
 <span class="sb" style="left:958.6px;letter-spacing:.42px">UTF-8</span>
 <span class="sb" style="left:1010.6px;letter-spacing:.1px">HTML</span>
 <svg style="position:absolute;left:1061px;top:8.5px" width="12" height="16" viewBox="0 0 12 16"><circle cx="2.6" cy="2.4" r="1.5" stroke="#9da5b4" stroke-width="1.1" fill="none"/><circle cx="2.6" cy="13.6" r="1.5" stroke="#9da5b4" stroke-width="1.1" fill="none"/><circle cx="9.4" cy="4.6" r="1.5" stroke="#9da5b4" stroke-width="1.1" fill="none"/><path d="M2.6 3.9 V12.1 M9.4 6.1 Q9.4 10 3 12.3" stroke="#9da5b4" stroke-width="1.1" fill="none"/></svg>
 <span class="sb" style="left:1077.5px;letter-spacing:.28px">master</span>
 <svg style="position:absolute;left:1132.4px;top:9.5px" width="13" height="13" viewBox="0 0 13 13"><rect x="0.75" y="0.75" width="11.5" height="11.5" rx="0.8" stroke="#e2c08d" stroke-width="1.4" fill="none"/><circle cx="6.5" cy="6.5" r="1.5" fill="#e2c08d"/></svg>
 <span class="sb" style="left:1147px;color:#e2c08d">+13</span>
 <span class="sb" style="left:1171px;color:#d9b886">-13</span>
 <span class="sb" style="left:1210px;color:#7d838e">git+</span>
</div>
<div id="bottom"></div>
<div id="wm">
 <svg width="110" height="57" viewBox="1130 718 110 57" style="position:absolute;left:0;top:0">
  <defs><linearGradient id="ga" x1="0" y1="0" x2="0" y2="1"><stop offset="0" stop-color="#1aa8f2"/><stop offset="0.6" stop-color="#12a0ee"/><stop offset="1" stop-color="#1d5fae"/></linearGradient>
  <linearGradient id="gb" x1="0" y1="0" x2="1" y2="0"><stop offset="0" stop-color="#18a4f0"/><stop offset="1" stop-color="#1c62b8"/></linearGradient></defs>
  <path d="M1157.5 728 A20 20 0 0 0 1157.5 768 A17 20 0 0 1 1157.5 728 Z" fill="url(#ga)"/>
  <path d="M1142.8 753 A17.5 17.5 0 0 1 1171.5 735.5" stroke="url(#gb)" stroke-width="2" fill="none"/>
  <path d="M1147.4 742.6 A13.8 13.8 0 0 1 1173 746.8" stroke="url(#gb)" stroke-width="1.6" fill="none"/>
 </svg>
 <div class="wmcn">运维网</div>
 <div class="wmen">iyunv.com</div>
</div>
<div id="menu">
<div class="mi">文件对比</div>
<div class="mi">向上分割窗格<svg class="arr" width="9" height="11" viewBox="0 0 9 11"><path d="M4.5 10.3 V1 M1 4.5 L4.5 1 L8 4.5" stroke="#111" stroke-width="1.35" fill="none"/></svg></div>
<div class="mi">向下分割窗格<svg class="arr" width="9" height="11" viewBox="0 0 9 11"><path d="M4.5 0.7 V10 M1 6.5 L4.5 10 L8 6.5" stroke="#111" stroke-width="1.35" fill="none"/></svg></div>
<div class="mi">向左分割窗格<svg class="arr" width="11" height="9" viewBox="0 0 11 9"><path d="M10.3 4.5 H1 M4.4 1 L0.9 4.5 L4.4 8" stroke="#111" stroke-width="1.3" fill="none"/></svg></div>
<div class="mi">向右分割窗格<svg class="arr" width="11" height="9" viewBox="0 0 11 9"><path d="M0.7 4.5 H10 M6.6 1 L10.1 4.5 L6.6 8" stroke="#111" stroke-width="1.3" fill="none"/></svg></div>
<div class="msep"></div>
<div class="mi hl">Git<span class="tri"></span></div>
<div class="msep"></div>
<div class="mi">在当前目录查找</div>
<div class="msep"></div>
<div class="mi">新建 APICloud 模板文件</div>
<div class="mi">新建文件</div>
<div class="mi">新建文件夹</div>
<div class="msep"></div>
<div class="mi">重命名</div>
<div class="mi">创建副本</div>
<div class="mi">删除</div>
<div class="mi">复制</div>
<div class="mi">剪切</div>
<div class="mi">粘贴</div>
<div class="msep"></div>
<div class="mi">添加项目文件夹</div>
<div class="msep"></div>
<div class="mi">复制文件路径到剪切板</div>
<div class="mi">复制项目路径到剪切板</div>
<div class="mi">在新窗口中打开</div>
<div class="mi">在 Finder 中显示</div>
</div>
<div id="subshadow"></div>
<div id="sub">
<div class="mi">Git add</div>
<div class="mi hl">Git add + commit</div>
<div class="mi">Git checkout</div>
<div class="mi">Git diff</div>
<div class="mi">Git diff branches</div>
<div class="mi">Git diff branche files</div>
<div class="mi">Git difftool</div>
<div class="mi">Git pull</div>
<div class="mi">Git push</div>
<div class="mi">Git push --set-upstream</div>
<div class="mi">Git unstage</div>
</div>
</body></html>
